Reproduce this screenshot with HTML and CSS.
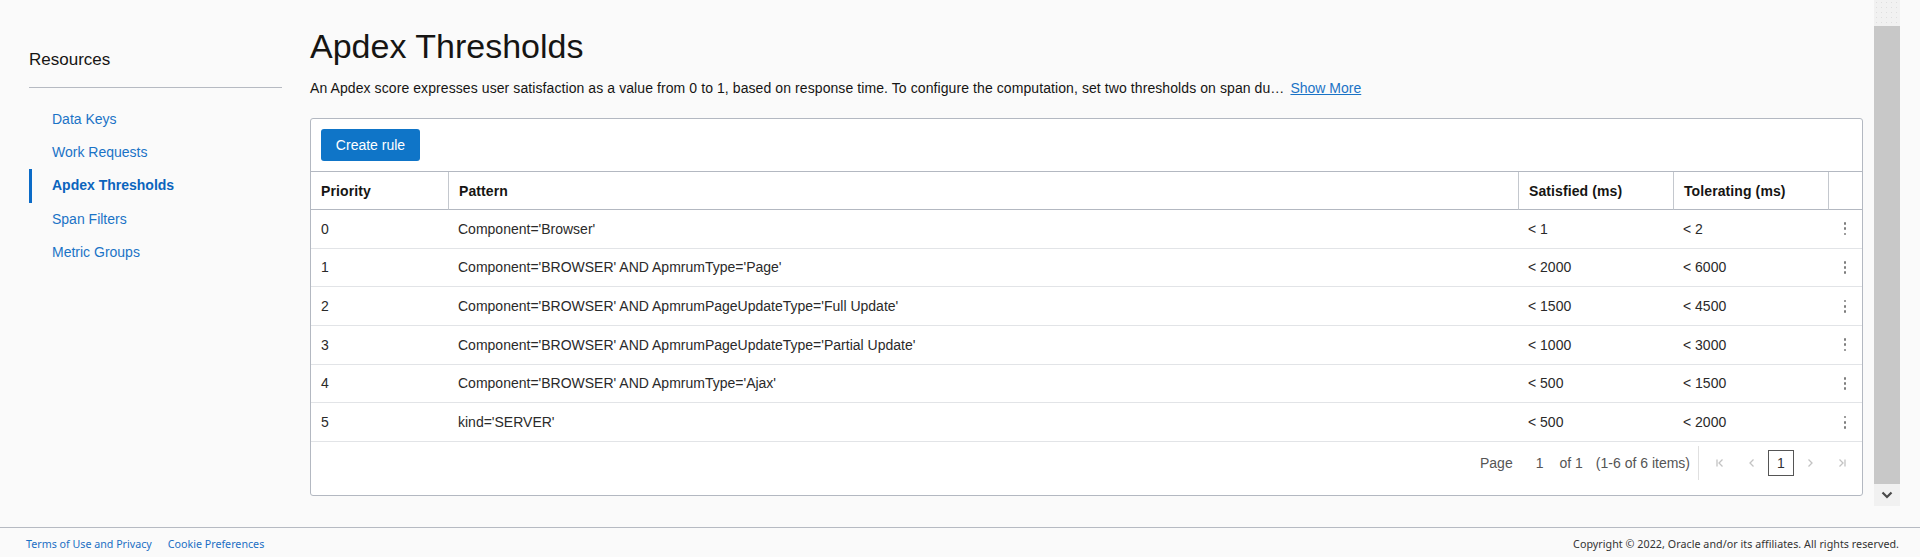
FILE: index.html
```html
<!DOCTYPE html>
<html lang="en">
<head>
<meta charset="utf-8">
<title>Apdex Thresholds</title>
<link rel="stylesheet" href="styles.css">
</head>
<body>
<div class="page">
  <div class="main">
    <aside class="sidebar">
      <h2 class="side-title">Resources</h2>
      <nav class="side-nav">
        <a class="nav-item" href="#">Data Keys</a>
        <a class="nav-item" href="#">Work Requests</a>
        <a class="nav-item active" href="#">Apdex Thresholds</a>
        <a class="nav-item" href="#">Span Filters</a>
        <a class="nav-item" href="#">Metric Groups</a>
      </nav>
    </aside>
    <section class="content">
      <h1 class="title">Apdex Thresholds</h1>
      <p class="desc">An Apdex score expresses user satisfaction as a value from 0 to 1, based on response time. To configure the computation, set two thresholds on span du… <a class="show-more" href="#">Show More</a></p>
      <div class="panel">
        <div class="toolbar"><button class="btn-primary" type="button">Create rule</button></div>
        <div class="grid">
          <div class="hcell first">Priority</div>
          <div class="hcell">Pattern</div>
          <div class="hcell">Satisfied (ms)</div>
          <div class="hcell">Tolerating (ms)</div>
          <div class="hcell"></div>

          <div class="cell">0</div>
          <div class="cell">Component='Browser'</div>
          <div class="cell">&lt; 1</div>
          <div class="cell">&lt; 2</div>
          <div class="cell act"><span class="kebab"><i></i><i></i><i></i></span></div>

          <div class="cell">1</div>
          <div class="cell">Component='BROWSER' AND ApmrumType='Page'</div>
          <div class="cell">&lt; 2000</div>
          <div class="cell">&lt; 6000</div>
          <div class="cell act"><span class="kebab"><i></i><i></i><i></i></span></div>

          <div class="cell">2</div>
          <div class="cell">Component='BROWSER' AND ApmrumPageUpdateType='Full Update'</div>
          <div class="cell">&lt; 1500</div>
          <div class="cell">&lt; 4500</div>
          <div class="cell act"><span class="kebab"><i></i><i></i><i></i></span></div>

          <div class="cell">3</div>
          <div class="cell">Component='BROWSER' AND ApmrumPageUpdateType='Partial Update'</div>
          <div class="cell">&lt; 1000</div>
          <div class="cell">&lt; 3000</div>
          <div class="cell act"><span class="kebab"><i></i><i></i><i></i></span></div>

          <div class="cell">4</div>
          <div class="cell">Component='BROWSER' AND ApmrumType='Ajax'</div>
          <div class="cell">&lt; 500</div>
          <div class="cell">&lt; 1500</div>
          <div class="cell act"><span class="kebab"><i></i><i></i><i></i></span></div>

          <div class="cell">5</div>
          <div class="cell">kind='SERVER'</div>
          <div class="cell">&lt; 500</div>
          <div class="cell">&lt; 2000</div>
          <div class="cell act"><span class="kebab"><i></i><i></i><i></i></span></div>
        </div>
        <div class="pager">
          <span class="pg-label">Page</span>
          <span class="pg-input">1</span>
          <span class="pg-of">of 1</span>
          <span class="pg-range">(1-6 of 6 items)</span>
          <div class="pg-nav">
            <span class="pg-btn w24"><svg width="10" height="10" viewBox="0 0 10 10"><path d="M2 1.5v7M7.5 1.5L4 5l3.5 3.5" fill="none" stroke="#c3c3c3" stroke-width="1.3"/></svg></span>
            <span class="pg-btn w24 gap8"><svg width="10" height="10" viewBox="0 0 10 10"><path d="M6.5 1.5L3 5l3.5 3.5" fill="none" stroke="#c3c3c3" stroke-width="1.3"/></svg></span>
            <span class="pg-page">1</span>
            <span class="pg-btn w24 gap4"><svg width="10" height="10" viewBox="0 0 10 10"><path d="M3.5 1.5L7 5 3.5 8.5" fill="none" stroke="#c3c3c3" stroke-width="1.3"/></svg></span>
            <span class="pg-btn w24 gap8"><svg width="10" height="10" viewBox="0 0 10 10"><path d="M2.5 1.5L6 5 2.5 8.5M8 1.5v7" fill="none" stroke="#c3c3c3" stroke-width="1.3"/></svg></span>
          </div>
        </div>
      </div>
    </section>
  </div>
  <div class="scrollbar">
    <div class="sb-up"></div>
    <div class="sb-thumb"></div>
    <div class="sb-down"><svg width="12" height="8" viewBox="0 0 12 8"><path d="M1.5 1.5L6 6l4.5-4.5" fill="none" stroke="#4a4a4a" stroke-width="2.2"/></svg></div>
  </div>
</div>
<footer class="footer">
  <div class="foot-links">
    <a href="#">Terms of Use and Privacy</a>
    <a href="#">Cookie Preferences</a>
  </div>
  <div class="copyright">Copyright © 2022, Oracle and/or its affiliates. All rights reserved.</div>
</footer>
</body>
</html>
```
FILE: styles.css
```css
* { box-sizing: border-box; }
html, body { margin: 0; padding: 0; }
body {
  width: 1920px;
  height: 557px;
  overflow: hidden;
  background: #fafafa;
  font-family: "Liberation Sans", Arial, sans-serif;
  color: #161513;
}
a { text-decoration: none; }

.page { display: flex; height: 527px; }
.main { flex: 1; display: flex; padding-left: 29px; padding-right: 11px; min-width: 0; }

.sidebar { width: 253px; flex: none; padding-top: 50px; }
.side-title {
  margin: 0;
  font-size: 17px;
  font-weight: normal;
  line-height: 20px;
  color: #161513;
  padding-bottom: 17px;
  border-bottom: 1px solid #b6bac2;
}
.side-nav { display: flex; flex-direction: column; padding-top: 14.5px; }
.nav-item {
  display: block;
  height: 33.4px;
  line-height: 33.4px;
  padding-left: 20px;
  border-left: 3px solid transparent;
  color: #1a73c6;
  font-size: 14px;
}
.nav-item.active { border-left-color: #0b6bc7; font-weight: bold; color: #0b64bd; }

.content { flex: 1; margin-left: 28px; padding-top: 26px; min-width: 0; }
.title { margin: 0; font-size: 34px; font-weight: normal; line-height: 40px; color: #161513; }
.desc { margin: 12px 0 0; font-size: 14px; line-height: 20px; color: #161513; white-space: nowrap; letter-spacing: 0.085px; }
.show-more { color: #1a73c6; text-decoration: underline; margin-left: 2px; letter-spacing: 0; }

.panel {
  margin-top: 20px;
  background: #fff;
  border: 1px solid #b3b8c1;
  border-radius: 3px;
}
.toolbar { padding: 10px 10px; border-bottom: 1px solid #b3b8c1; }
.btn-primary {
  display: block;
  width: 99px;
  height: 32px;
  border: none;
  border-radius: 3px;
  background: #0f75c8;
  color: #fff;
  font-family: "Liberation Sans", Arial, sans-serif;
  font-size: 14px;
  padding: 0;
}

.grid { display: grid; grid-template-columns: 137px 1070px 155px 155px 1fr; }
.hcell {
  height: 38px;
  display: flex;
  align-items: center;
  padding-left: 10px;
  border-bottom: 1px solid #b3b8c1;
  border-left: 1px solid #c4c8ce;
  font-size: 14px;
  font-weight: bold;
  color: #161513;
  letter-spacing: 0.1px;
}
.hcell.first { border-left: none; }
.cell {
  height: 38.67px;
  display: flex;
  align-items: center;
  padding-left: 10px;
  border-bottom: 1px solid #e2e4e7;
  font-size: 14px;
  color: #2a2a2a;
}
.cell.act { justify-content: center; padding-left: 0; }
.kebab { display: flex; flex-direction: column; gap: 2.4px; }
.kebab i { display: block; width: 2.8px; height: 2.8px; border-radius: 50%; background: #7d7d7d; }

.pager {
  display: flex;
  justify-content: flex-end;
  align-items: center;
  height: 34px;
  margin: 4px 0 15px;
  font-size: 14px;
  color: #555;
}
.pg-label { margin-right: 23px; }
.pg-input { margin-right: 16px; }
.pg-of { margin-right: 13px; }
.pg-range { margin-right: 8px; }
.pg-nav {
  display: flex;
  align-items: center;
  height: 34px;
  border-left: 1px solid #e0e0e0;
  padding-left: 9px;
  padding-right: 8px;
}
.pg-btn { display: flex; align-items: center; justify-content: center; height: 26px; }
.w24 { width: 24px; }
.gap8 { margin-left: 8px; }
.gap4 { margin-left: 4px; }
.pg-page {
  margin-left: 4px;
  width: 26px;
  height: 26px;
  border: 1px solid #555;
  display: flex;
  align-items: center;
  justify-content: center;
  color: #333;
}

.scrollbar {
  width: 26px;
  height: 506px;
  margin-right: 20px;
  flex: none;
  display: flex;
  flex-direction: column;
  background: #f1f1f1;
}
.sb-up {
  height: 26px;
  background-color: #f1f1f1;
  background-image: radial-gradient(circle, #dedede 0.6px, transparent 0.9px);
  background-size: 5px 5px;
}
.sb-thumb { flex: 1; background: #c8c8c8; }
.sb-down { height: 22px; display: flex; align-items: center; justify-content: center; }

.footer {
  height: 30px;
  border-top: 1px solid #b6bac2;
  display: flex;
  justify-content: space-between;
  align-items: center;
  padding: 3px 21px 0 26px;
  font-family: "Noto Sans", "Open Sans", sans-serif;
  font-size: 10.7px;
}
.foot-links { display: flex; gap: 16px; }
.foot-links a { color: #1a6fc4; }
.copyright { color: #333; letter-spacing: 0.05px; }
```
